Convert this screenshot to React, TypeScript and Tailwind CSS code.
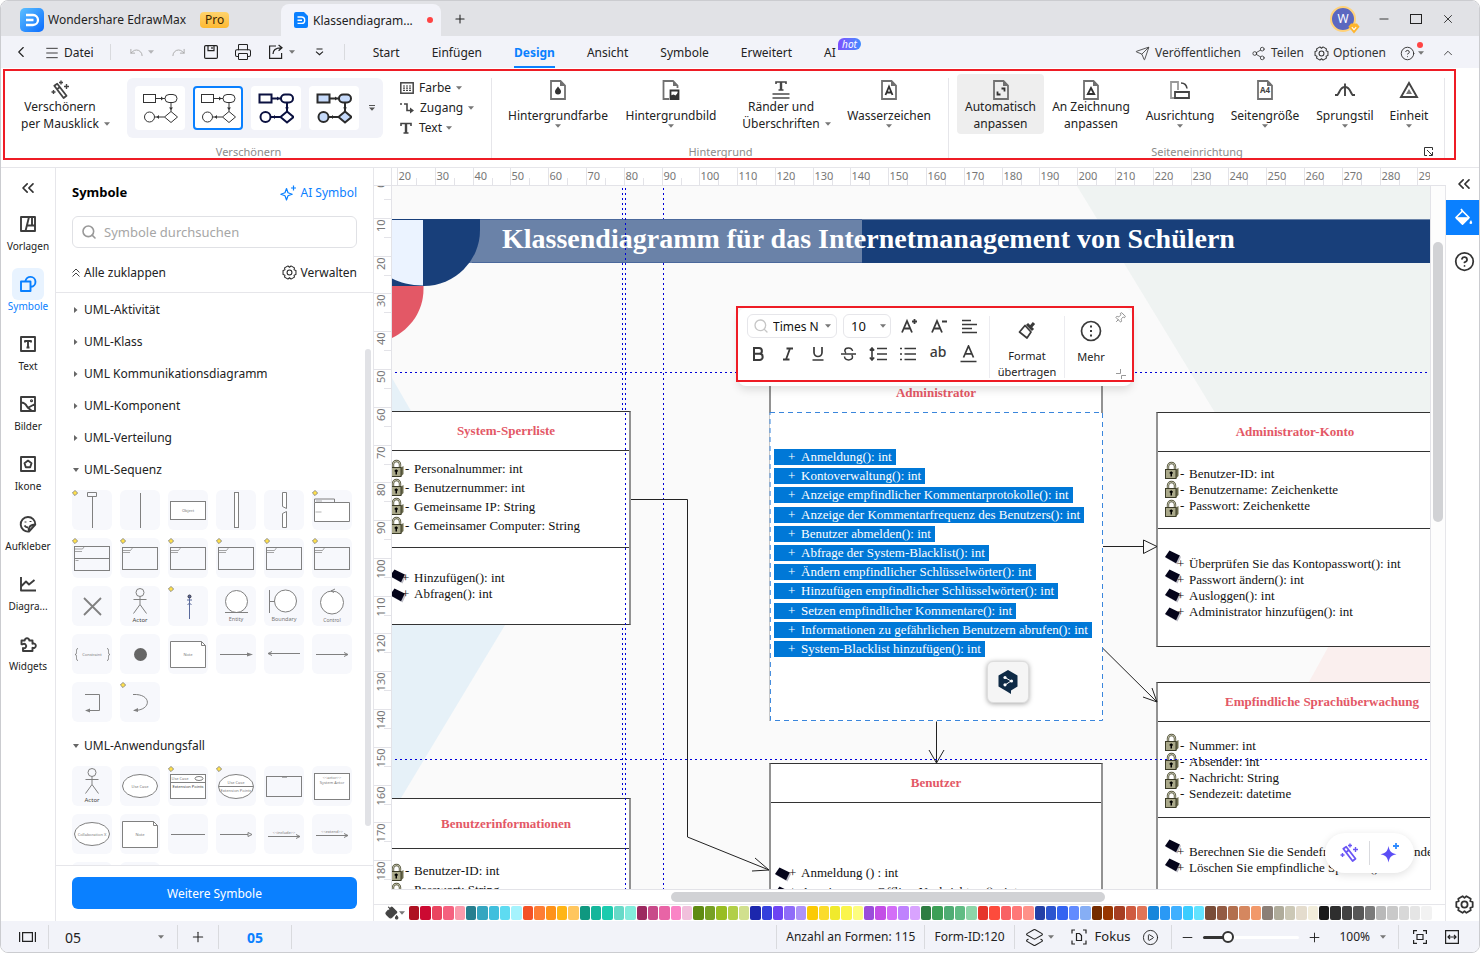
import type { ReactNode } from "react";
import {
  ChevronLeft,
  ChevronsLeft,
  ChevronUp,
  CircleHelp,
  CirclePlay,
  Layers2,
  Menu,
  Minus,
  PaintBucket,
  Pin,
  Plus,
  Printer,
  Redo,
  Search,
  Send,
  Share2,
  Undo,
  X,
} from "lucide-react";
import clsx from "clsx";

const STEP = 37.79;

const PALETTE = [
  "#ae1122", "#cc0a32", "#ea4560", "#f5617f", "#fa9bac",
  "#267f8f", "#35a6c0", "#40bfdd", "#5edbf1", "#a5f3fd",
  "#f45226", "#fe7d35", "#fe9219", "#ffb516", "#ffc65e",
  "#0f9880", "#14b69b", "#1bcbae", "#67dac8", "#84ecdc",
  "#9c2960", "#c84a8a", "#e864a6", "#fa84c6", "#f1c0dc",
  "#5f8b12", "#76a024", "#98bd22", "#b1cf48", "#d1e08e",
  "#1c27ad", "#3440dc", "#6e44f3", "#8f6cf9", "#ae93f8",
  "#fbca04", "#fbdc2c", "#f0ea2c", "#faf54b", "#fdfd7f",
  "#9b4ddb", "#c34ee6", "#d36ef7", "#bf82fe", "#d9a3ff",
  "#2e7d42", "#3c9f56", "#4fac74", "#60bc84", "#8dd5a8",
  "#e6352b", "#fd4b3c", "#f96164", "#ff7878", "#ff9189",
  "#2340a6", "#2c55cf", "#3464f1", "#628bff", "#86aef5",
  "#752c00", "#983600", "#a63e23", "#cf5b40", "#e07457",
  "#1787db", "#2a99f5", "#40b0ff", "#3bcdff", "#62e3ff",
  "#794d38", "#935b43", "#b26f4e", "#d5875f", "#f2996a",
  "#8b7f77", "#b0ac9b", "#ccc8b6", "#e4dccd", "#f2eddb",
  "#191919", "#2e2e2e", "#424242", "#575757", "#7a7a7a",
  "#b9b9b9", "#c9c9c9", "#d8d8d8", "#e5e5e5", "#f2f2f2", "#ffffff",
];

/* ---------- small shared icons ---------- */

function Caret({ className }: { className?: string }) {
  return (
    <svg width="6" height="4" viewBox="0 0 6 4" className={clsx("shrink-0", className)} aria-hidden>
      <path d="M0 0.3h6L3 3.7z" fill="#777" />
    </svg>
  );
}

// six soft lobes around a hub
const GEAR = Array.from({ length: 6 }, (_, i) => {
  const at = (deg: number, r: number) => {
    const a = ((i * 60 + deg) * Math.PI) / 180;
    return `${(8 + r * Math.cos(a)).toFixed(2)} ${(8 + r * Math.sin(a)).toFixed(2)}`;
  };
  return `${i ? "L" : "M"}${at(-17, 7.2)}L${at(17, 7.2)}L${at(30, 5.6)}`;
}).join("") + "Z";

function Gear({ size = 15, width = 1.1 }: { size?: number; width?: number }) {
  return (
    <svg width={size} height={size} viewBox="0 0 16 16" fill="none" stroke="currentColor" strokeWidth={width} strokeLinejoin="round" aria-hidden>
      <path d={GEAR} />
      <circle cx="8" cy="8" r="2.6" />
    </svg>
  );
}

function Divider({ className }: { className?: string }) {
  return <div className={clsx("w-px shrink-0 bg-[#d9dade]", className)} />;
}

function BrandMark({ size }: { size: number }) {
  return (
    <svg width={size} height={size} viewBox="0 0 24 24" aria-hidden>
      <defs>
        <linearGradient id="brand" x1="0" y1="0" x2="1" y2="1">
          <stop offset="0" stopColor="#5cc0ff" />
          <stop offset="1" stopColor="#0a6cff" />
        </linearGradient>
      </defs>
      <rect width="24" height="24" rx="5" fill="url(#brand)" />
      <path d="M6 7h7a5 5 0 0 1 0 10H6M6 12h7.500" fill="none" stroke="#fff" strokeWidth="2.300" />
    </svg>
  );
}

/* ---------- title bar and menu ---------- */

function TitleBar() {
  return (
    <header className="flex h-[35px] shrink-0 items-center bg-[#e1e2e6]">
      <div className="flex w-[280px] items-center pl-[19px] pt-[2px]">
        <BrandMark size={24} />
        <span className="ml-1 text-[12px] text-[#1f1f1f]">Wondershare EdrawMax</span>
        <span className="ml-[14px] rounded bg-gradient-to-b from-[#ffd36b] to-[#fdb92f] px-[5px] text-[12px] leading-4 text-[#3d2600]">Pro</span>
      </div>
      <div className="flex h-8 w-40 items-center self-end rounded-t-lg bg-[#f2f3f9] pl-[13px] pr-2">
        <svg width="14" height="16" viewBox="0 0 14 16" aria-hidden>
          <path d="M2 0h8l4 4v10a2 2 0 0 1-2 2H2a2 2 0 0 1-2-2V2a2 2 0 0 1 2-2z" fill="#0a80ff" />
          <path d="M3.500 5h4a3 3 0 0 1 0 6.400h-4M3.500 8.200H8" fill="none" stroke="#fff" strokeWidth="1.400" />
        </svg>
        <span className="ml-[5px] flex-1 whitespace-nowrap pt-px text-[12px] text-[#222]">Klassendiagram...</span>
        <span className="size-[6px] rounded-full bg-[#ff4444]" />
      </div>
      <button aria-label="Neuer Tab" className="ml-3 pt-px text-[#222]"><Plus size={14} strokeWidth={1.8} /></button>
      <div className="ml-auto flex items-center gap-[19px] pr-6 text-[#222]">
        <div className="relative mr-[2px] flex size-[26px] items-center justify-center rounded-full border-2 border-[#ffd27a] bg-[#5b68c0] text-[12px] text-white">
          W
          <svg width="12" height="11" viewBox="0 0 12 11" className="absolute -bottom-1 -right-[6px]" aria-hidden>
            <path d="M3 0.500h6l2.600 3.300L6 10.600 0.400 3.800z" fill="#ffb52e" />
            <path d="M3.800 4.200 6 6.600l2.200-2.400" fill="none" stroke="#fff" strokeWidth="1.100" />
          </svg>
        </div>
        <button aria-label="Minimieren"><Minus size={14} strokeWidth={1.5} /></button>
        <button aria-label="Maximieren">
          <svg width="12" height="12" viewBox="0 0 12 12" fill="none" stroke="currentColor" aria-hidden><rect x="0.500" y="1.500" width="11" height="9" /></svg>
        </button>
        <button aria-label="Schließen"><X size={14} strokeWidth={1.5} /></button>
      </div>
    </header>
  );
}

const TABS = ["Start", "Einfügen", "Design", "Ansicht", "Symbole", "Erweitert", "AI"];

function MenuBar() {
  return (
    <nav className="flex h-8 shrink-0 items-center bg-[#f2f3f9] text-[12px] text-[#222]">
      <button aria-label="Zurück" className="ml-[11px]"><ChevronLeft size={18} strokeWidth={1.5} /></button>
      <button className="ml-[14px] flex items-center gap-1 pt-px"><Menu size={16} strokeWidth={1.3} />Datei</button>
      <Divider className="ml-4 h-4" />
      <button aria-label="Rückgängig" className="ml-[18px] text-[#aaa]"><Undo size={15} strokeWidth={1.5} /></button>
      <Caret className="ml-1 opacity-50" />
      <button aria-label="Wiederholen" className="ml-[17px] text-[#aaa]"><Redo size={15} strokeWidth={1.5} /></button>
      <button aria-label="Speichern" className="ml-[18px]">
        <svg width="14" height="14" viewBox="0 0 14 14" fill="none" stroke="#222" strokeWidth="1.200" aria-hidden>
          <rect x="0.600" y="0.600" width="12.800" height="12.800" rx="1.200" />
          <path d="M4 0.600v5h6v-5M8 2v2" />
        </svg>
      </button>
      <button aria-label="Drucken" className="ml-4"><Printer size={18} strokeWidth={1.4} /></button>
      <button aria-label="Exportieren" className="ml-4">
        <svg width="16" height="16" viewBox="0 0 16 16" fill="none" stroke="#222" strokeWidth="1.200" aria-hidden>
          <path d="M8 2H1.600v12.400h12V9M5 10c0-4 2.400-6.200 8-6.200M10.600 1l3.400 2.800-3.400 2.900" />
        </svg>
      </button>
      <Caret className="ml-[5px]" />
      <button aria-label="Weitere Befehle" className="ml-5">
        <svg width="9" height="8" viewBox="0 0 9 8" fill="none" stroke="#222" strokeWidth="1.200" aria-hidden><path d="M1.500 1h6M1 3.600l3.500 3L8 3.600" /></svg>
      </button>
      <Divider className="ml-5 h-4" />
      <div className="ml-7 flex h-full items-center gap-8">
        {TABS.map((t) => (
          <button
            key={t}
            className={clsx(
              "relative h-full border-b-2 pt-[3px]",
              t === "Design" ? "border-[#0a80ff] font-bold text-[#0a80ff]" : "border-transparent",
            )}
          >
            {t}
            {t === "AI" && (
              <span className="absolute left-[14px] top-[2px] rounded-full rounded-bl-none bg-gradient-to-r from-[#7b4dff] to-[#3d8bff] px-1 text-[10px] italic leading-3 text-white">hot</span>
            )}
          </button>
        ))}
      </div>
      <div className="ml-auto flex items-center gap-[10px] pr-6 pt-[2px] text-[#333]">
        <button className="flex items-center gap-[5px]"><Send size={15} strokeWidth={1.3} />Veröffentlichen</button>
        <button className="flex items-center gap-[5px]"><Share2 size={15} strokeWidth={1.3} />Teilen</button>
        <button className="flex items-center gap-1"><Gear />Optionen</button>
        <button aria-label="Hilfe" className="relative ml-1 flex items-center gap-[3px]">
          <CircleHelp size={15} strokeWidth={1.5} />
          <Caret />
          <span className="absolute -top-1 right-px size-[6px] rounded-full bg-[#ff4444]" />
        </button>
        <button aria-label="Menüband einklappen" className="ml-[7px]"><ChevronUp size={14} strokeWidth={1.5} /></button>
      </div>
    </nav>
  );
}

/* ---------- ribbon ---------- */

function FlowPreview({ fill, stroke, width }: { fill: string; stroke: string; width: number }) {
  return (
    <svg width="36" height="32" viewBox="0 0 36 32" fill={fill} stroke={stroke} strokeWidth={width} aria-hidden>
      <rect x="1.500" y="2.500" width="12" height="8" />
      <rect x="23" y="2.500" width="12" height="8" rx="4" />
      <circle cx="7.500" cy="25" r="5" />
      <path d="M29 19.500l6.500 5.500-6.500 5.500-6.500-5.500z" />
      <path d="M13.500 6.500H23M29 10.500v9M22.500 25H13" fill="none" />
      <path d="M19 4.500l2.500 2-2.500 2zM27 15.500h4l-2 2.500zM17 23l-2.500 2 2.500 2z" fill={stroke} stroke="none" />
    </svg>
  );
}

const PREVIEWS = [
  { fill: "#fff", stroke: "#333", width: 1 },
  { fill: "#fff", stroke: "#333", width: 1 },
  { fill: "#fff", stroke: "#0b1140", width: 2 },
  { fill: "#c6dafa", stroke: "#2b2b2b", width: 2 },
];

function Page({ children }: { children?: ReactNode }) {
  return (
    <svg width="18" height="20" viewBox="0 0 18 20" fill="none" aria-hidden>
      <path d="M2 1h9.500L16 5.500V19H2z" stroke="#707070" strokeWidth="1.800" />
      <path d="M11 1v5h5z" fill="#707070" />
      {children}
    </svg>
  );
}

function RibbonButton({ icon, lines, caret, active, className }: {
  icon: ReactNode;
  lines: string[];
  caret?: "below" | "side";
  active?: boolean;
  className: string;
}) {
  return (
    <button className={clsx("flex h-[60px] shrink-0 flex-col items-center rounded pt-[6px] text-[12px] leading-[17px] text-[#222]", active && "bg-[#eeeeee]", className)}>
      <span className="flex h-[18px] items-start justify-center">{icon}</span>
      {lines.map((line, i) => (
        <span key={line} className={clsx("relative flex items-center whitespace-nowrap", lines.length === 1 && "mt-[9px]")}>
          {line}
          {caret === "side" && i === lines.length - 1 && <Caret className="absolute left-full ml-[5px]" />}
        </span>
      ))}
      {caret === "below" && <Caret />}
    </button>
  );
}

function RibbonGroup({ title, className, corner, children }: { title: string; className: string; corner?: ReactNode; children: ReactNode }) {
  return (
    <section className={clsx("flex shrink-0 flex-col bg-[linear-gradient(#e6e6ea,#e6e6ea)] bg-[length:1px_80px] bg-[position:100%_7px] bg-no-repeat", className)}>
      <div className="flex h-[63px] pt-[3px]">{children}</div>
      <div className="relative mt-3 text-center text-[11px] leading-3 text-[#8a8a8a]">
        {title}
        {corner}
      </div>
    </section>
  );
}

function WandIcon({ color = "#444", size = 20 }: { color?: string; size?: number }) {
  return (
    <svg width={size} height={size} viewBox="0 0 20 20" fill="none" stroke={color} aria-hidden>
      <path d="M4.300 5.700 7.200 3.700l9.300 12-2.900 2.300zM7 9.300l3-2.200" strokeWidth="1.800" strokeLinejoin="round" />
      <path d="M11 0.500v4M9 2.500h4M16.500 4v5M14 6.500h5M3.500 10v4M1.500 12h4" strokeWidth="1.400" />
    </svg>
  );
}

function Ribbon() {
  return (
    <div className="shrink-0 border-b border-[#e6e6ea] bg-white pb-[7px] pl-[2px] pr-[23px] pt-px">
      <div className="flex overflow-hidden border-2 border-[#ee1c25]">
        <RibbonGroup title="Verschönern" className="w-[487px]">
          <RibbonButton icon={<WandIcon />} lines={["Verschönern", "per Mausklick"]} caret="side" className="w-[110px]" />
          <div className="ml-3 mt-1 flex h-[60px] w-64 shrink-0 items-center gap-2 rounded-md bg-[#f2f3f9] px-2">
            {PREVIEWS.map((p, i) => (
              <button key={i} aria-label={`Stil ${i + 1}`} className={clsx("flex h-11 w-[50px] items-center justify-center rounded bg-white", i === 1 && "border-2 border-[#0a80ff]")}>
                <FlowPreview {...p} />
              </button>
            ))}
            <svg width="8" height="6" viewBox="0 0 8 6" aria-hidden><path d="M2 0h6v1H2zM2 2.500h6L5 5.800z" fill="#555" /></svg>
          </div>
          <div className="ml-[17px] mt-1 flex flex-col text-[12px] leading-5 text-[#222]">
            <button className="flex items-center gap-[5px]">
              <svg width="14" height="12" viewBox="0 0 14 12" aria-hidden>
                <rect x="0.800" y="0.800" width="12.400" height="10.400" fill="none" stroke="#444" strokeWidth="1.500" />
                <path d="M3 4h8M3 6.200h8M3 8.400h8" stroke="#444" strokeWidth="1.200" strokeDasharray="2 1" />
              </svg>
              Farbe <Caret />
            </button>
            <button className="flex items-center gap-[5px]">
              <svg width="15" height="12" viewBox="0 0 15 12" fill="none" stroke="#444" strokeWidth="1.600" aria-hidden>
                <path d="M0 2h2M4 2h3v6.500h3" /><path d="M10 5.500l4 3-4 3z" fill="#444" stroke="none" />
              </svg>
              Zugang <Caret />
            </button>
            <button className="flex items-center gap-[7px]">
              <svg width="12" height="12" viewBox="0 0 12 12" fill="none" stroke="#444" aria-hidden>
                <path d="M1 4V1.500h10V4M3.500 11h5" strokeWidth="1.600" /><path d="M6 1.500V11" strokeWidth="2.400" />
              </svg>
              <span className="flex items-center gap-1">Text <Caret /></span>
            </button>
          </div>
        </RibbonGroup>

        <RibbonGroup title="Hintergrund" className="w-[457px]">
          <RibbonButton
            className="ml-2 w-[116px]"
            icon={<Page><path d="M9 6.500c2 2.500 3 3.600 3 5a3 3 0 0 1-6 0c0-1.400 1-2.500 3-5z" fill="#333" /></Page>}
            lines={["Hintergrundfarbe"]}
            caret="below"
          />
          <RibbonButton
            className="w-[110px]"
            icon={
              <svg width="18" height="20" viewBox="0 0 18 20" fill="none" aria-hidden>
                <path d="M7 19H1.500V1h9.500L15.500 5.500V8" stroke="#707070" strokeWidth="1.800" />
                <path d="M11 1v5h5z" fill="#707070" />
                <path d="M8.500 10.500h8V19h-8z" fill="#fff" stroke="#333" strokeWidth="1.800" />
                <path d="M8.500 18.500v-3l3-1 2 1 3-3.500V19z" fill="#333" />
              </svg>
            }
            lines={["Hintergrundbild"]}
            caret="below"
          />
          <RibbonButton
            className="w-[110px]"
            icon={
              <svg width="18" height="20" viewBox="0 0 18 20" fill="none" stroke="#444" aria-hidden>
                <path d="M4 4V2h10v2M6.500 10h5" strokeWidth="1.600" /><path d="M9 2v8" strokeWidth="2.400" />
                <path d="M0.500 14h17M0.500 18h17" stroke="#777" strokeWidth="1.800" />
              </svg>
            }
            lines={["Ränder und", "Überschriften"]}
            caret="side"
          />
          <RibbonButton
            className="w-[106px]"
            icon={<Page><path d="M5.500 15 9 6.500l3.500 8.500M6.800 12.500h4.400" stroke="#333" strokeWidth="1.800" /></Page>}
            lines={["Wasserzeichen"]}
            caret="below"
          />
        </RibbonGroup>

        <RibbonGroup
          title="Seiteneinrichtung"
          className="w-[496px]"
          corner={
            <button aria-label="Seite einrichten" className="absolute right-3 top-px">
              <svg width="9" height="9" viewBox="0 0 9 9" fill="none" stroke="#333" aria-hidden><path d="M3 8.500H.5v-8h8V3M3 3l5 5M8.500 5v3.500H5" /></svg>
            </button>
          }
        >
          <RibbonButton
            active
            className="ml-2 w-[87px]"
            icon={<Page><path d="M9.500 8.500h3v3M8.500 14.500h-3v-3" stroke="#333" strokeWidth="1.800" /></Page>}
            lines={["Automatisch", "anpassen"]}
          />
          <RibbonButton
            className="w-[94px]"
            icon={<Page><path d="M9 8l3.200 6H5.800z" stroke="#333" strokeWidth="1.800" /></Page>}
            lines={["An Zeichnung", "anpassen"]}
          />
          <RibbonButton
            className="w-[84px]"
            icon={
              <svg width="20" height="20" viewBox="0 0 20 20" fill="none" aria-hidden>
                <path d="M5 18H1V2h7v8" stroke="#999" strokeWidth="1.800" />
                <path d="M5 12h14v6H5z" stroke="#444" strokeWidth="1.800" />
                <path d="M11 3c4 0 5.500 2 6 5.500" stroke="#444" strokeWidth="1.600" />
              </svg>
            }
            lines={["Ausrichtung"]}
            caret="below"
          />
          <RibbonButton
            className="w-[86px]"
            icon={<Page><text x="9" y="13" textAnchor="middle" fontSize="8" fontWeight="700" fill="#444">A4</text></Page>}
            lines={["Seitengröße"]}
            caret="below"
          />
          <RibbonButton
            className="w-[74px]"
            icon={
              <svg width="20" height="20" viewBox="0 0 20 20" fill="none" stroke="#444" strokeWidth="1.900" aria-hidden>
                <path d="M0 15h2.500C5 12 5 7 10 7s5 5 7.500 8H20M10 3.500V16" />
              </svg>
            }
            lines={["Sprungstil"]}
            caret="below"
          />
          <RibbonButton
            className="w-[54px]"
            icon={
              <svg width="20" height="20" viewBox="0 0 20 20" fill="none" aria-hidden>
                <path d="M10 3l8 14H2z" stroke="#444" strokeWidth="1.900" /><path d="M10 9l3 5H7z" fill="#777" />
              </svg>
            }
            lines={["Einheit"]}
            caret="below"
          />
        </RibbonGroup>
      </div>
    </div>
  );
}

/* ---------- left rail ---------- */

const RAIL: { label: string; active?: boolean; icon: ReactNode }[] = [
  { label: "Vorlagen", icon: <path d="M1 1h14v14H1zM5.500 15 9 1M7 9.500H15M12 1v8.500" /> },
  { label: "Symbole", active: true, icon: <><path d="M1 5.500h9.500V15H1z" /><path d="M5.500 5.200A5 5 0 1 1 11 10.800" /></> },
  { label: "Text", icon: <path d="M1 1h14v14H1zM5 6.500V5h6v1.500M8 5v6.500M6.500 11.500h3" /> },
  { label: "Bilder", icon: <><path d="M1 1h14v14H1zM1 6.500c4 0 5 2 6 4s4 3 5 4.500M8.500 11.500 15 8" /><circle cx="11.500" cy="4.700" r=".6" /></> },
  { label: "Ikone", icon: <path d="M1 1h14v14H1zM8 4.600l3.500 2.600-1.300 4H5.800l-1.300-4z" /> },
  { label: "Aufkleber", icon: <><path d="M9 15.500A7.300 7.300 0 1 1 15.300 8.500L9 15.500c-1-3 .5-7 6.300-7" /><path d="M5.500 5.500v1M10.500 5v1M4.500 9.500c1 1.500 2 2 3.500 2" /></> },
  { label: "Diagra...", icon: <path d="M1 1v13.500h15M1.500 10 6 5.500l3 3L14.500 4" /> },
  { label: "Widgets", icon: <path d="M1.500 4.500h3.200a2.300 2.300 0 1 1 4.600 0h3.200v3.200a2.300 2.300 0 1 1 0 4.100V15H3v-3a2.200 2.200 0 1 0-.2-3.800H1.500z" /> },
];

function LeftRail() {
  return (
    <aside className="flex w-[55px] shrink-0 flex-col items-center border-r border-[#e6e6ea] bg-white">
      <button aria-label="Einklappen" className="flex h-10 items-center text-[#333]"><ChevronsLeft size={20} /></button>
      <div className="flex flex-col gap-2">
        {RAIL.map((r) => (
          <button key={r.label} className={clsx("flex h-[52px] flex-col items-center text-[10px] leading-3", r.active ? "text-[#0a80ff]" : "text-[#222]")}>
            <span className={clsx("flex size-8 shrink-0 items-center justify-center rounded-md", r.active ? "bg-[#e8f3ff]" : "text-[#3c3c3c]")}>
              <svg width="18" height="18" viewBox="-1 -1 18 18" fill="none" stroke="currentColor" strokeWidth="1.900" strokeLinejoin="round" aria-hidden>{r.icon}</svg>
            </span>
            {r.label}
          </button>
        ))}
      </div>
    </aside>
  );
}

/* ---------- symbol library ---------- */

const g = "#808080";

function TileText({ x = 20, y, size = 4, fill = "#777", children }: { x?: number; y: number; size?: number; fill?: string; children: string }) {
  return <text x={x} y={y} fontSize={size} textAnchor="middle" fill={fill} stroke="none">{children}</text>;
}

const frame = (
  <>
    <rect x="2.500" y="9.500" width="35" height="22" />
    <path d="M2.500 12.500h8l1.500-2v-1M3 14.500h7" strokeWidth=".7" />
  </>
);

const actor = (
  <>
    <circle cx="20" cy="6.500" r="4" />
    <path d="M20 10.500v8M13.500 13.500h13M20 18.500l-6.500 9M20 18.500l6.500 9" />
    <TileText y={36} size={6} fill="#444">Actor</TileText>
  </>
);

const note = (
  <>
    <path d="M2.500 7.500h31l4 4v22h-35z" fill="#fff" /><path d="M33.500 7.500v4h4" />
    <TileText y={22}>Note</TileText>
  </>
);

type Tile = { d: ReactNode; mark?: boolean };

const SEQUENCE: Tile[] = [
  { mark: true, d: <path d="M15.500 2.500h9v4h-9zM20.500 6.500V38" /> },
  { d: <path d="M20.500 3v35" /> },
  { d: <><rect x="2.500" y="11.500" width="35" height="18" fill="#fff" /><TileText y={22}>Object</TileText></> },
  { d: <rect x="18.500" y="2.500" width="4" height="35" fill="#fff" /> },
  { d: <path d="M18.500 2.500h4v16l-4-2zM18.500 23.500l4-2v16h-4z" fill="#fff" /> },
  { mark: true, d: <><path d="M2.500 12.500h35v19h-35z" fill="#fff" /><path d="M2.500 12.500v-3.500h20v3.500" /><path d="M4 11h6M3.500 22h6" strokeWidth=".6" /></> },
  { mark: true, d: <><rect x="2.500" y="8.500" width="35" height="24" /><path d="M2.500 20.500h35" /><path d="M2.500 11h8l1.500-2M3 13.500h7M3.500 22.500h3" strokeWidth=".7" /></> },
  { mark: true, d: frame },
  { mark: true, d: frame },
  { mark: true, d: frame },
  { mark: true, d: frame },
  { mark: true, d: frame },
  { d: <path d="M12 12l17 17M29 12 12 29" strokeWidth="1.800" /> },
  { d: actor },
  { mark: true, d: <><circle cx="21.500" cy="10.500" r="1.500" fill="#5a6a9c" stroke="#334" /><path d="M21.500 12v6M19 14h5M21.500 18v15M19.500 19l2-2 2 2" stroke="#5a6a9c" /></> },
  { d: <><circle cx="20.500" cy="15.500" r="11" fill="#fff" /><path d="M9 26.500h23" /><TileText y={34.5} size={5.5}>Entity</TileText></> },
  { d: <><circle cx="21.500" cy="15" r="11" fill="#fff" /><path d="M5.500 4v23M5.500 15.500h5" /><TileText y={34.5} size={5.5}>Boundary</TileText></> },
  { d: <><circle cx="20" cy="16.500" r="11.500" fill="#fff" /><path d="M23 3l-4 2 3 1.500" /><TileText y={36} size={5}>Control</TileText></> },
  { d: <><path d="M6 14.500c-3 0 0 6-3 6 3 0 0 6 3 6M35 14.500c3 0 0 6 3 6-3 0 0 6-3 6" /><TileText y={22}>Constraint</TileText></> },
  { d: <circle cx="20.500" cy="20.500" r="6.500" fill="#666" stroke="none" /> },
  { d: note },
  { d: <><path d="M4 20.500h29" /><path d="M31 18.500l6 2-6 2z" fill={g} stroke="none" /></> },
  { d: <path d="M4 19.500h32M8 17.500l-4 2 4 2" /> },
  { d: <path d="M4 20.500h32M32 18.500l4 2-4 2" /> },
  { d: <><path d="M13 12.500h14.500v16H14" /><path d="M18 26.500l-5 2 5 2z" fill={g} stroke="none" /></> },
  { mark: true, d: <><path d="M13 12.500c19-1 19 16 1 16" /><path d="M18 26l-5 2.500 5 1.500z" fill={g} stroke="none" /></> },
];

const USE_CASE: Tile[] = [
  { d: actor },
  { d: <><ellipse cx="20" cy="20" rx="17.500" ry="11.500" fill="#fff" /><TileText y={22}>Use Case</TileText></> },
  { mark: true, d: <><rect x="2.500" y="8.500" width="35" height="24" fill="#fff" /><path d="M2.500 16.500h35" /><ellipse cx="31" cy="12.500" rx="4" ry="2" /><TileText x={12} y={14}>Use Case</TileText><TileText y={22} fill="#333">Extension Points</TileText></> },
  { mark: true, d: <><ellipse cx="20" cy="20.500" rx="17.500" ry="12" fill="#fff" /><path d="M2.500 20.500h35" /><TileText y={18}>Use Case</TileText><TileText y={26}>Extension Points</TileText></> },
  { d: <><rect x="2.500" y="10.500" width="35" height="20" /><path d="M18 11.500h5" strokeWidth=".6" /></> },
  { d: <><rect x="2.500" y="7.500" width="35" height="26" fill="#fff" /><TileText y={12.5}>{"<<actor>>"}</TileText><TileText y={18}>System Actor</TileText></> },
  { d: <><ellipse cx="20" cy="20" rx="17.500" ry="11.500" fill="#fff" /><TileText y={22}>Collaboration X</TileText></> },
  { d: note },
  { d: <path d="M3 20.500h34" /> },
  { d: <path d="M4 20.500h28M32 18.500l4 2-4 2z" /> },
  { d: <><path d="M4 22.500h32M32 20.500l4 2-4 2" /><TileText y={20}>{"<<include>>"}</TileText></> },
  { d: <><path d="M4 21.500h32M32 19.500l4 2-4 2" /><TileText y={19}>{"<<extend>>"}</TileText></> },
  { d: null },
  { d: null },
];

function TileGrid({ tiles }: { tiles: Tile[] }) {
  return (
    <div className="grid grid-cols-6 gap-2 pb-[7px] pl-4 pr-[21px] pt-[5px]">
      {tiles.map((t, i) => (
        <div key={i} className="relative size-10 rounded-md bg-[#f7f8fc]">
          <svg width="40" height="40" viewBox="0 0 40 40" fill="none" stroke={g} aria-hidden>{t.d}</svg>
          {t.mark && (
            <svg width="6" height="6" viewBox="0 0 6 6" className="absolute left-0 top-0" aria-hidden><path d="M3 .4 5.600 3 3 5.600.4 3z" fill="#ffe04a" stroke="#777" strokeWidth=".8" /></svg>
          )}
        </div>
      ))}
    </div>
  );
}

function TreeItem({ label, open }: { label: string; open?: boolean }) {
  return (
    <button className="flex h-8 w-full items-center pl-4 pt-[2px] text-left text-[12px] text-[#222]">
      <svg width="8" height="8" viewBox="0 0 8 8" className="mr-1" aria-hidden>
        <path d={open ? "M1 2h6L4 6z" : "M2 1l3.500 3L2 7z"} fill="#666" />
      </svg>
      {label}
    </button>
  );
}

const CLOSED = ["UML-Aktivität", "UML-Klass", "UML Kommunikationsdiagramm", "UML-Komponent", "UML-Verteilung"];

function SymbolPanel() {
  return (
    <aside className="flex w-[318px] shrink-0 flex-col border-r border-[#e6e6ea] bg-white text-[12px] text-[#222]">
      <div className="border-b border-[#e6e6ea] px-4">
        <div className="flex h-12 items-center justify-between pt-px">
          <h2 className="text-[13px] font-bold text-black">Symbole</h2>
          <button className="flex items-center gap-1 text-[#0a80ff]">
            <svg width="16" height="16" viewBox="0 0 16 16" fill="none" stroke="currentColor" strokeWidth="1.200" aria-hidden>
              <path d="M6.500 3.500 8 7.800l4.200 1.500L8 10.800l-1.500 4.200L5 10.800.800 9.300 5 7.800z" strokeLinejoin="round" /><path d="M13.500.5v5M11 3h5" />
            </svg>
            AI Symbol
          </button>
        </div>
        <label className="flex h-8 items-center gap-[7px] rounded-md border border-[#e0e1e5] px-2">
          <Search size={16} color="#999" strokeWidth={2.4} className="shrink-0" />
          <input aria-label="Symbole durchsuchen" placeholder="Symbole durchsuchen" className="w-full bg-transparent pt-[2px] text-[13px] outline-none placeholder:text-[#a6a6a6]" />
        </label>
        <div className="flex h-11 items-center justify-between pt-[5px]">
          <button className="flex items-center gap-1">
            <svg width="8" height="9" viewBox="0 0 8 9" fill="none" stroke="#444" aria-hidden><path d="M.5 4.500 4 1l3.500 3.500M.5 8.500 4 5l3.500 3.500" /></svg>
            Alle zuklappen
          </button>
          <button className="flex items-center gap-1"><Gear />Verwalten</button>
        </div>
      </div>
      <div className="relative min-h-0 flex-1 overflow-hidden">
        {CLOSED.map((c) => <TreeItem key={c} label={c} />)}
        <TreeItem label="UML-Sequenz" open />
        <TileGrid tiles={SEQUENCE} />
        <TreeItem label="UML-Anwendungsfall" open />
        <TileGrid tiles={USE_CASE} />
        <div className="absolute right-[2px] top-14 h-[477px] w-[6px] rounded-full bg-[#e1e2e6]" />
      </div>
      <div className="border-t border-[#e6e6ea] px-4 pb-3 pt-[11px]">
        <button className="h-8 w-full rounded-md bg-[#0a80ff] pt-px text-[12px] text-white">Weitere Symbole</button>
      </div>
    </aside>
  );
}

/* ---------- rulers ---------- */

function TopRuler() {
  return (
    <svg className="h-[17px] min-w-0 flex-1" stroke="#e3e3e8" fontSize="11" aria-hidden>
      {Array.from({ length: 28 }, (_, i) => {
        const x = Math.round(5 + i * STEP) + 0.5;
        return (
          <g key={i}>
            <path d={`M${x} 0V17M${x + 19} 10V17`} />
            <text x={x + 1} y="12" fill="#777" stroke="none">{20 + i * 10}</text>
          </g>
        );
      })}
    </svg>
  );
}

function SideRuler() {
  return (
    <svg className="h-full w-[18px] shrink-0 border-r border-[#e3e3e8] bg-white" stroke="#e3e3e8" fontSize="11" aria-hidden>
      {Array.from({ length: 19 }, (_, i) => {
        const y = Math.round(-6 + i * STEP) + 0.5;
        return (
          <g key={i}>
            <path d={`M0 ${y}H18M10 ${y + 19}H18`} />
            <text transform={`translate(11 ${y + 1}) rotate(-90)`} textAnchor="end" fill="#777" stroke="none">{i * 10}</text>
          </g>
        );
      })}
    </svg>
  );
}

/* ---------- class nodes ---------- */

function Lock() {
  return (
    <svg width="14" height="18" viewBox="0 0 14 18" className="shrink-0" aria-hidden>
      <path d="M3 9V5.500a3.500 3.500 0 0 1 7 0V8" fill="none" stroke="#55553c" strokeWidth="2.400" />
      <path d="M3 9V5.500a3.500 3.500 0 0 1 7 0V8" fill="none" stroke="#c9c9b4" strokeWidth=".9" />
      <path d="M11 8.500l2.500-1.500v8L11 17.500z" fill="#6c6c4e" />
      <rect x=".5" y="8.500" width="10.500" height="9" fill="#aaa98a" stroke="#3c3c28" />
      <path d="M5.500 10.500h1.500v5H5.500zM4.700 11h3v1.800h-3z" fill="#000" />
    </svg>
  );
}

function Book() {
  return (
    <svg width="16" height="16" viewBox="0 0 16 16" className="shrink-0" aria-hidden>
      <path d="M14.500 6l1.500 2-3.500 7.500L0 8.500z" fill="#bfbfc8" />
      <path d="M4.500 1.500 14.800 6.500 11 14.200 0 8z" fill="#04041a" />
    </svg>
  );
}

function Members({ kind, rows, iconsClass, textClass, className }: {
  kind: "lock" | "book";
  rows: string[];
  iconsClass: string;
  textClass: string;
  className?: string;
}) {
  return (
    <div className={clsx("flex overflow-hidden", className)}>
      <div className={clsx("flex shrink-0 flex-col", kind === "lock" ? "w-[15px] gap-px" : "w-3 gap-[3px]", iconsClass)}>
        {rows.map((r) => (kind === "lock" ? <Lock key={r} /> : <Book key={r} />))}
      </div>
      <ul className={textClass}>
        {rows.map((r) => (
          <li key={r} className="flex whitespace-nowrap">
            <span className={clsx("shrink-0", kind === "lock" ? "w-[9px]" : "w-3")}>{kind === "lock" ? "-" : "+"}</span>
            {r}
          </li>
        ))}
      </ul>
    </div>
  );
}

function ClassNode({ title, className, headClass = "h-[39px] border-[#333]", children }: { title: string; className: string; headClass?: string; children?: ReactNode }) {
  return (
    <article className={clsx("absolute flex flex-col border-x-2 border-y border-x-[#929292] border-y-[#333] bg-white text-[13px] text-[#111]", className)}>
      <h3 className={clsx("flex shrink-0 items-center justify-center border-b font-bold text-[#e35866]", headClass)}>{title}</h3>
      {children}
    </article>
  );
}

const SELECTED = [
  "Anmeldung(): int",
  "Kontoverwaltung(): int",
  "Anzeige empfindlicher Kommentarprotokolle(): int",
  "Anzeige der Kommentarfrequenz des Benutzers(): int",
  "Benutzer abmelden(): int",
  "Abfrage der System-Blacklist(): int",
  "Ändern empfindlicher Schlüsselwörter(): int",
  "Hinzufügen empfindlicher Schlüsselwörter(): int",
  "Setzen empfindlicher Kommentare(): int",
  "Informationen zu gefährlichen Benutzern abrufen(): int",
  "System-Blacklist hinzufügen(): int",
];

function Diagram() {
  return (
    <div className="absolute inset-0 font-['Liberation_Serif',serif]">
      {/* page background, banner and the guides lying under the shapes */}
      <svg className="absolute inset-0 h-full w-full" aria-hidden>
        <path d="M0 192 128 414 0 627z" fill="#e6f1f8" />
        <path d="M685 0H1400V230H825z" fill="#eff3f2" />
        <path d="M945 445h455v60H912z" fill="#faefee" />
        <g stroke="#0000d8" strokeDasharray="2 3">
          <path d="M230.500 2V900M271.500 2V900M3 186.500H1040" />
        </g>
        <path d="M0 33h471v44H0z" fill="#6a82a8" />
        <path d="M0 33.500h471M80 76.500h391" stroke="#4a689b" />
        <path d="M470 33h930v44H470z" fill="#183f7a" />
        <path d="M470 33.500h930" stroke="#6a82a8" />
        <path d="M0 33h88v11a56 56 0 0 1-56 56H0z" fill="#183f7a" />
        <path d="M0 34h31v65.500C18 99.500 8 96.500 0 92.500z" fill="#ebf3ff" />
        <path d="M0 100h31.500v3c0 22-13 40-31.500 49z" fill="#e35866" />
      </svg>
      <h1 className="absolute left-[110px] top-9 whitespace-nowrap text-[28px] font-bold leading-[34px] text-white">
        Klassendiagramm für das Internetmanagement von Schülern
      </h1>

      <ClassNode title="System-Sperrliste" className="-left-[11px] top-[225px] h-[214px] w-[250px]">
        <Members
          kind="lock"
          className="h-[97px] shrink-0 border-b border-[#333] pl-[7px]"
          iconsClass="pt-2"
          textClass="pt-2 leading-[19px]"
          rows={["Personalnummer: int", "Benutzernummer: int", "Gemeinsame IP: String", "Gemeinsamer Computer: String"]}
        />
        <Members kind="book" className="pl-[7px]" iconsClass="pt-5" textClass="pt-[22px] leading-4" rows={["Hinzufügen(): int", "Abfragen(): int"]} />
      </ClassNode>

      <ClassNode title="Benutzerinformationen" className="-left-[11px] top-[612px] h-[214px] w-[250px]" headClass="h-[50px] border-[#333]">
        <Members
          kind="lock"
          className="pl-[7px]"
          iconsClass="pt-[14px]"
          textClass="pt-3 leading-[19px]"
          rows={["Benutzer-ID: int", "Passwort: String"]}
        />
      </ClassNode>

      <ClassNode title="Administrator" className="left-[377px] top-[188px] h-[347px] w-[334px]" headClass="h-[37px] border-white">
        <ul className="mt-[37px] flex h-[208px] flex-col items-start justify-between pl-[3px] leading-4 text-white">
          {SELECTED.map((s) => (
            <li key={s} className="flex h-4 whitespace-nowrap bg-[#0078d7] pl-[14px] pr-1">
              <span className="w-[13px]">+</span>
              {s}
            </li>
          ))}
        </ul>
      </ClassNode>

      <ClassNode title="Benutzer" className="left-[377px] top-[577px] h-[214px] w-[334px]">
        <Members
          kind="book"
          className="pl-1"
          iconsClass="pt-[63px]"
          textClass="pl-[2px] pt-[60px] leading-[19px]"
          rows={["Anmeldung () : int", "Anzeigen von Offline-Nachrichten () : int"]}
        />
      </ClassNode>

      <ClassNode title="Administrator-Konto" className="left-[764px] top-[226px] h-[235px] w-[278px]">
        <Members
          kind="lock"
          className="h-[77px] shrink-0 border-b border-[#333] pl-[7px]"
          iconsClass="pt-[9px]"
          textClass="pt-[14px] leading-4"
          rows={["Benutzer-ID: int", "Benutzername: Zeichenkette", "Passwort: Zeichenkette"]}
        />
        <Members
          kind="book"
          className="pl-[7px]"
          iconsClass="pt-5"
          textClass="pt-[27px] leading-4"
          rows={["Überprüfen Sie das Kontopasswort(): int", "Passwort ändern(): int", "Ausloggen(): int", "Administrator hinzufügen(): int"]}
        />
      </ClassNode>

      <ClassNode title="Empfindliche Sprachüberwachung" className="left-[764px] top-[496px] h-[235px] w-[332px]">
        <Members
          kind="lock"
          className="h-[96px] shrink-0 border-b border-[#333] pl-[7px]"
          iconsClass="pt-[11px]"
          textClass="pt-4 leading-4"
          rows={["Nummer: int", "Absender: int", "Nachricht: String", "Sendezeit: datetime"]}
        />
        <Members
          kind="book"
          className="pl-[7px]"
          iconsClass="pt-5"
          textClass="pt-[26px] leading-4"
          rows={["Berechnen Sie die Sendefrequenz des Absenders(): int", "Löschen Sie empfindliche Sprache(): int"]}
        />
      </ClassNode>

      {/* connectors, selection outline and the guides lying on top */}
      <svg className="absolute inset-0 h-full w-full" fill="none" stroke="#222" aria-hidden>
        <path d="M239 313.500h56.500V651L377 684M363 672l14 12-17 1" />
        <path d="M711 360.500h40M751.500 354v13.500l13.500-7z" />
        <path d="M711 462.500 765 516M760 502l5 14-14-5" />
        <path d="M544.500 535v42M537 564l7.500 13 7.500-13" />
        <path d="M378.500 227v308M710 227v308M378 534.500h333" stroke="#fff" strokeWidth="2" />
        <path d="M378 226.500h332.500v308H378.500z" stroke="#3a86dc" strokeDasharray="5 4" />
        <path d="M233.500 2V900M3 573.500H1037" stroke="#0000d8" strokeDasharray="2 3" />
      </svg>
    </div>
  );
}

/* ---------- floating things over the canvas ---------- */

function TextToolbar() {
  const tool = "flex w-[30px] items-center justify-center";
  return (
    <div className="absolute left-[344px] top-[120px] h-[76px] w-[398px]">
      <div className="m-[2px] flex h-[78px] rounded-lg bg-white text-[#3a3a3a] shadow-[0_4px_8px_rgba(0,0,0,0.12)]">
        <div className="w-[251px] pl-[9px] pt-[6px]">
          <div className="flex h-6 items-center">
            <label className="flex h-6 w-[90px] items-center rounded-md border border-[#e6e6ea] pl-[5px] pr-1">
              <Search size={16} color="#c6c6c6" className="shrink-0" />
              <input aria-label="Schriftart" defaultValue="Times N" className="ml-1 w-[52px] bg-transparent pt-px text-[12px] text-[#111] outline-none" />
              <Caret />
            </label>
            <label className="ml-[6px] flex h-6 w-12 items-center rounded-md border border-[#e6e6ea] pl-[7px] pr-1">
              <input aria-label="Schriftgröße" defaultValue="10" className="w-full bg-transparent pt-px text-[13px] text-[#111] outline-none" />
              <Caret />
            </label>
            <div className="ml-[3px] flex">
              <button aria-label="Größer" className={tool}>
                <svg width="17" height="16" viewBox="0 0 17 16" fill="none" stroke="currentColor" strokeWidth="1.800" aria-hidden><path d="M1 14.500 6 3l5 11.500M3 10.500h6M11 3.500h5M13.500 1v5" /></svg>
              </button>
              <button aria-label="Kleiner" className={tool}>
                <svg width="17" height="16" viewBox="0 0 17 16" fill="none" stroke="currentColor" strokeWidth="1.800" aria-hidden><path d="M1 14.500 6 3l5 11.500M3 10.500h6M11 3.500h5" /></svg>
              </button>
              <button aria-label="Ausrichten" className={tool}>
                <svg width="15" height="15" viewBox="0 0 15 15" fill="none" stroke="currentColor" strokeWidth="1.700" aria-hidden><path d="M0 1.500h9M0 5.500h15M0 9.500h10M0 13.500h15" /></svg>
              </button>
            </div>
          </div>
          <div className="-ml-1 mt-1 flex h-6 items-center text-[#3a3a3a]">
            <button aria-label="Fett" className={tool}>
              <svg width="12" height="14" viewBox="0 0 12 14" fill="none" stroke="currentColor" strokeWidth="2" aria-hidden><path d="M2 1h5a2.900 2.900 0 0 1 0 5.800H2zM2 6.800h5.600a3.100 3.100 0 0 1 0 6.200H2z" /></svg>
            </button>
            <button aria-label="Kursiv" className={tool}>
              <svg width="12" height="14" viewBox="0 0 12 14" fill="none" stroke="currentColor" strokeWidth="1.800" aria-hidden><path d="M4.500 1.500H11M1 12.500h6.500M8 1.500 4 12.500" /></svg>
            </button>
            <button aria-label="Unterstrichen" className={tool}>
              <svg width="12" height="14" viewBox="0 0 12 14" fill="none" stroke="currentColor" strokeWidth="1.700" aria-hidden><path d="M2 0v5.500a4 4 0 0 0 8 0V0M.5 13h11" /></svg>
            </button>
            <button aria-label="Durchgestrichen" className={tool}>
              <svg width="15" height="14" viewBox="0 0 15 14" fill="none" stroke="currentColor" strokeWidth="1.500" aria-hidden><path d="M11.500 4C11 0 4 0 3.800 3.600c0 1 .5 1.700 1.200 2.200M3.500 9.500c.3 4.500 8 4.500 8 .5 0-1-.3-1.500-.8-2M0 7h15" /></svg>
            </button>
            <button aria-label="Zeilenabstand" className={tool}>
              <svg width="18" height="14" viewBox="0 0 18 14" fill="none" stroke="currentColor" strokeWidth="1.600" aria-hidden><path d="M8 1.500h10M8 7h10M8 12.500h10M3 1v12M.8 3.500 3 1l2.200 2.500M.8 10.500 3 13l2.200-2.500" /></svg>
            </button>
            <button aria-label="Aufzählung" className={tool}>
              <svg width="16" height="14" viewBox="0 0 16 14" fill="none" stroke="currentColor" strokeWidth="1.700" aria-hidden><path d="M4.500 1.500H16M4.500 7H16M4.500 12.500H16M0 1.500h2M0 7h2M0 12.500h2" /></svg>
            </button>
            <button className="w-[30px] pb-1 text-center text-[14px] font-medium leading-4">ab</button>
            <button aria-label="Schriftfarbe" className={tool}>
              <svg width="17" height="18" viewBox="0 0 17 18" fill="none" stroke="currentColor" strokeWidth="1.700" aria-hidden><path d="M3.500 12.500 8.500 1l5 11.500M5.300 8.800h6.400M.5 16.500h16" /></svg>
            </button>
          </div>
        </div>
        <Divider className="my-2 bg-[#ececf0]" />
        <button className="flex w-[74px] flex-col items-center pt-[13px] text-[11px] leading-4 text-[#222]">
          <svg width="18" height="18" viewBox="0 0 18 18" fill="none" stroke="#3a3a3a" strokeWidth="1.700" strokeLinejoin="round" aria-hidden>
            <path d="M7 4.500 13 11l-4 6-7.500-6z" /><path d="M9 3l6 6M12.500 6l3.500-4" strokeWidth="3" />
          </svg>
          <span className="mt-[9px]">Format<br />übertragen</span>
        </button>
        <Divider className="my-2 bg-[#ececf0]" />
        <button className="flex w-[52px] flex-col items-center pt-3 text-[11px] leading-4 text-[#222]">
          <svg width="22" height="22" viewBox="0 0 22 22" fill="none" stroke="#3a3a3a" strokeWidth="1.700" aria-hidden>
            <circle cx="11" cy="11" r="9.500" /><path d="M11 5.500v2M11 10v2M11 14.500v2" strokeWidth="2" />
          </svg>
          <span className="mt-[7px]">Mehr</span>
        </button>
      </div>
      <Pin size={12} color="#888" strokeWidth={1.8} className="absolute right-2 top-[6px] rotate-45" />
      <svg width="10" height="10" viewBox="0 0 10 10" fill="none" stroke="#999" className="absolute bottom-[3px] right-2" aria-hidden><path d="M4.500 0v4.500H0M5.500 10V6.500H10" /></svg>
      <div className="pointer-events-none absolute inset-0 border-2 border-[#ee1c25]" />
    </div>
  );
}

function Canvas() {
  return (
    <main className="flex min-w-0 flex-1 flex-col bg-white">
      <div className="flex h-[18px] shrink-0 border-b border-[#e3e3e8]">
        <div className="w-[18px] shrink-0 border-r border-[#e3e3e8]" />
        <TopRuler />
        <div className="w-4 shrink-0" />
      </div>
      <div className="flex min-h-0 flex-1">
        <SideRuler />
        <div className="relative min-w-0 flex-1 overflow-hidden border-b border-r border-[#e3e3e8] bg-[#fafafa]">
          <Diagram />
          <TextToolbar />
          <button aria-label="Übersetzen" className="absolute left-[595px] top-[475px] flex size-[42px] items-center justify-center rounded-md border border-[#ddd] bg-[#f5f5f5] shadow-[0_1px_5px_rgba(0,0,0,0.35)]">
            <svg width="22" height="26" viewBox="0 0 22 26" aria-hidden>
              <path d="M11 1l9.500 5.500v11L14 21.500V25l-4-2.500L1.500 17.500v-11z" fill="#0f2b46" />
              <path d="M8 8.500l6 3.500-6 4" fill="none" stroke="#fff" />
              <circle cx="8" cy="8.500" r="1.600" fill="#fff" /><circle cx="14.500" cy="12" r="1.600" fill="#fff" /><circle cx="8" cy="15.800" r="1.600" fill="#fff" />
            </svg>
          </button>
          <div className="absolute bottom-4 right-4 flex h-10 w-[89px] items-center justify-center gap-[10px] rounded-full bg-white shadow-[0_2px_8px_rgba(0,0,0,0.12)]">
            <button aria-label="Verschönern"><WandIcon color="#6a55f5" /></button>
            <Divider className="h-6" />
            <button aria-label="AI">
              <svg width="20" height="20" viewBox="0 0 20 20" aria-hidden>
                <path d="M8.500 3c1.200 5.500 2.500 7 8 8.300-5.500 1.300-6.800 2.700-8 8.200-1.200-5.500-2.500-6.900-8-8.200 5.500-1.300 6.800-2.800 8-8.300z" fill="#5b4df5" />
                <path d="M16 0v6M13 3h6" stroke="#2f8bff" strokeWidth="1.800" />
              </svg>
            </button>
          </div>
        </div>
        <div className="w-[15px] shrink-0 border-r border-[#e6e6ea] bg-[#fdfdfd] px-[2px] pt-14">
          <div className="h-[280px] w-[10px] rounded-full bg-[#d1d2d5]" />
        </div>
      </div>
      <div className="flex h-[15px] shrink-0 border-b border-r border-[#e6e6ea] pl-[297px] pt-[2px]">
        <div className="h-[10px] w-[434px] rounded-full bg-[#d1d2d5]" />
      </div>
      <div className="flex h-4 shrink-0 items-center border-r border-[#e6e6ea] pl-[11px] pr-[2px]">
        <PaintBucket size={14} color="#444" fill="#444" />
        <Caret className="mr-1" />
        <div className="flex flex-1 gap-px">
          {PALETTE.map((c) => <button key={c} aria-label={c} className="h-[14px] flex-1 rounded-[2px]" style={{ background: c }} />)}
        </div>
      </div>
    </main>
  );
}

function RightRail() {
  return (
    <aside className="flex w-[33px] shrink-0 flex-col items-center bg-white text-[#333]">
      <button aria-label="Ausklappen" className="flex h-8 items-center pl-[3px]"><ChevronsLeft size={20} /></button>
      <button aria-label="Füllung" className="flex h-[35px] w-full items-center justify-center bg-[#0a80ff] pl-[3px] text-white">
        <svg width="20" height="20" viewBox="0 0 20 20" fill="none" stroke="currentColor" strokeWidth="1.700" strokeLinejoin="round" aria-hidden>
          <path d="M8.500 3 15 9.500 8.500 16 2 9.500zM2 10.500h13" /><path d="M8.500 3 7 1" />
          <path d="M2.500 10h12l-6 6z" fill="currentColor" /><path d="M17 12c1.600 2.400 1.600 4-.2 4s-1.800-1.600.2-4z" fill="currentColor" stroke="none" />
        </svg>
      </button>
      <button aria-label="Hilfe" className="mt-4 pl-[3px]"><CircleHelp size={21} /></button>
      <button aria-label="Einstellungen" className="mb-[7px] mt-auto pl-[3px]"><Gear size={19} width={1.5} /></button>
    </aside>
  );
}

function StatusBar() {
  return (
    <footer className="flex h-[31px] shrink-0 items-center bg-[#f2f3f9] pt-px text-[12px] text-[#222]">
      <button aria-label="Seitenleiste" className="ml-[18px]">
        <svg width="17" height="12" viewBox="0 0 17 12" fill="none" stroke="#222" strokeWidth="1.200" aria-hidden><path d="M.6 1v10M16.400 1v10M3.600 1.600h9.800v8.800H3.600z" /></svg>
      </button>
      <Divider className="ml-3 h-6" />
      <button className="flex w-32 items-center justify-between pl-4 pr-[13px] text-[14px]">05 <Caret /></button>
      <Divider className="h-6" />
      <button aria-label="Seite hinzufügen" className="flex w-10 justify-center"><Plus size={16} strokeWidth={1.600} /></button>
      <Divider className="h-6" />
      <button className="w-[72px] text-center text-[14px] font-bold text-[#0a80ff]">05</button>
      <Divider className="h-6" />
      <div className="ml-auto flex items-center">
        <Divider className="h-6" />
        <span className="px-[9px]">Anzahl an Formen: 115</span>
        <Divider className="h-6" />
        <span className="px-[9px]">Form-ID:120</span>
        <Divider className="h-6" />
        <button aria-label="Ebenen" className="ml-[10px] flex items-center gap-1"><Layers2 size={19} strokeWidth={1.300} /><Caret /></button>
        <button className="ml-[17px] flex items-center gap-2 text-[13px]">
          <svg width="16" height="16" viewBox="0 0 16 16" fill="none" stroke="#222" strokeWidth="1.200" aria-hidden><path d="M4 1H1v3.500M12 1h3v3.500M4 15H1v-3.500M12 15h3v-3.500M5.500 4.500h3l2 2v5h-5z" /></svg>
          Fokus
        </button>
        <button aria-label="Präsentation" className="ml-3"><CirclePlay size={17} strokeWidth={1.300} /></button>
        <Divider className="ml-3 h-6" />
        <button aria-label="Verkleinern" className="ml-2"><Minus size={15} strokeWidth={1.500} /></button>
        <input
          type="range"
          aria-label="Zoom"
          defaultValue={22}
          className="mx-2 h-[3px] w-24 appearance-none rounded-full bg-[linear-gradient(90deg,#333_25%,#fff_25%)] [&::-webkit-slider-thumb]:size-3 [&::-webkit-slider-thumb]:appearance-none [&::-webkit-slider-thumb]:rounded-full [&::-webkit-slider-thumb]:border-2 [&::-webkit-slider-thumb]:border-[#333] [&::-webkit-slider-thumb]:bg-white"
        />
        <button aria-label="Vergrößern"><Plus size={15} strokeWidth={1.500} /></button>
        <button className="ml-[17px] flex items-center gap-[10px]">100% <Caret /></button>
        <Divider className="ml-3 h-6" />
        <button aria-label="Einpassen" className="ml-[14px]">
          <svg width="14" height="14" viewBox="0 0 14 14" fill="none" stroke="#222" strokeWidth="1.200" aria-hidden><path d="M4 .6H.6V4M10 .6h3.400V4M4 13.400H.6V10M10 13.400h3.400V10M4 4.500h6v5H4z" /></svg>
        </button>
        <button aria-label="Seitenbreite" className="ml-[18px] mr-5">
          <svg width="14" height="14" viewBox="0 0 14 14" fill="none" stroke="#222" strokeWidth="1.200" aria-hidden><path d="M.6.6h12.800v12.800H.6zM3 7h8M5 5 3 7l2 2M9 5l2 2-2 2" /></svg>
        </button>
      </div>
    </footer>
  );
}

export default function App() {
  return (
    <div className="flex h-screen flex-col overflow-hidden rounded-lg border border-[#cbccd0] bg-white font-['Noto_Sans',sans-serif]">
      <TitleBar />
      <MenuBar />
      <Ribbon />
      <div className="flex min-h-0 flex-1">
        <LeftRail />
        <SymbolPanel />
        <Canvas />
        <RightRail />
      </div>
      <StatusBar />
    </div>
  );
}
